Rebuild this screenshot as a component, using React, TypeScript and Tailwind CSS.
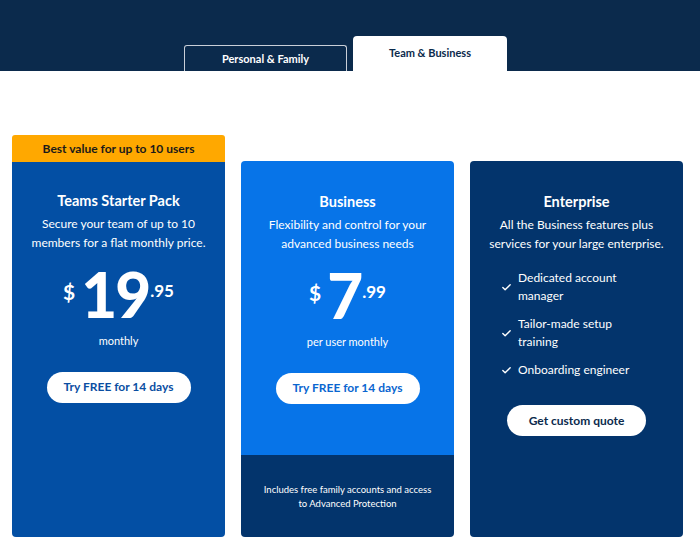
import { Check } from 'lucide-react'

type Plan = {
  title: string
  desc: string[]
  bg: string
}

function Price({ whole, cents, note }: { whole: string; cents: string; note: string }) {
  return (
    <div className="flex flex-col items-center">
      <div className="flex items-start justify-center leading-none mt-[15px]">
        <span className="text-[21px] font-bold mt-[14px] mr-[6px]">$</span>
        <span className="text-[62px] font-black tracking-[-2px] leading-[54px]">{whole}</span>
        <span className="text-[17px] font-bold mt-[15px] ml-[1px]">.{cents}</span>
      </div>
      <div className="text-[11px] mt-[12px]">{note}</div>
    </div>
  )
}

function TryButton({ color }: { color: string }) {
  return (
    <button className={`mt-[22px] w-[144px] h-[31px] rounded-full bg-white text-[12px] font-bold ${color}`}>
      Try FREE for 14 days
    </button>
  )
}

function Header({ plan }: { plan: Plan }) {
  return (
    <>
      <h3 className="text-[14.5px] font-bold mt-[31px] leading-[20px]">{plan.title}</h3>
      <p className="text-[12px] leading-[19px] mt-[3px] px-2">
        {plan.desc.map((l) => (
          <span key={l} className="block">{l}</span>
        ))}
      </p>
    </>
  )
}

export default function App() {
  const starter: Plan = {
    title: 'Teams Starter Pack',
    desc: ['Secure your team of up to 10', 'members for a flat monthly price.'],
    bg: 'bg-[#034fa4]',
  }
  const business: Plan = {
    title: 'Business',
    desc: ['Flexibility and control for your', 'advanced business needs'],
    bg: 'bg-[#0774e8]',
  }
  const enterprise: Plan = {
    title: 'Enterprise',
    desc: ['All the Business features plus', 'services for your large enterprise.'],
    bg: 'bg-[#03346c]',
  }

  const features = [['Dedicated account', 'manager'], ['Tailor-made setup', 'training'], ['Onboarding engineer']]

  return (
    <div className="w-[700px] h-[548px] bg-white font-['Lato',sans-serif] text-white overflow-hidden">
      {/* tab bar */}
      <div className="h-[71px] bg-[#0b2a4c] flex items-end pl-[184px] gap-[6px]">
        <div className="w-[163px] h-[26px] border-[1.5px] border-b-0 border-[#c9cfd8] rounded-t-[3px] flex items-center justify-center text-[11px] font-bold pt-[2px]">
          Personal &amp; Family
        </div>
        <div className="w-[154px] h-[35px] bg-white rounded-t-[4px] flex justify-center pt-[9px] text-[11px] font-bold text-[#0b2a4c]">
          Team &amp; Business
        </div>
      </div>

      <div className="flex gap-[16px] pl-[12px] mt-[64px] items-end">
        {/* starter */}
        <div className="w-[213px] flex flex-col">
          <div className="h-[28px] bg-[#ffa800] rounded-t-[3px] flex items-center justify-center text-[12px] font-bold text-[#1a1a1a]">
            Best value for up to 10 users
          </div>
          <div className={`h-[375px] ${starter.bg} rounded-b-[4px] flex flex-col items-center text-center -mt-[1px]`}>
            <div className="-mt-[2px] flex flex-col items-center">
              <Header plan={starter} />
            </div>
            <Price whole="19" cents="95" note="monthly" />
            <TryButton color="text-[#0a4ea2]" />
          </div>
        </div>

        {/* business */}
        <div className="w-[213px] h-[376px] rounded-[4px] overflow-hidden flex flex-col">
          <div className={`flex-1 ${business.bg} flex flex-col items-center text-center`}>
            <Header plan={business} />
            <Price whole="7" cents="99" note="per user monthly" />
            <TryButton color="text-[#0a66d0]" />
          </div>
          <div className="h-[82px] bg-[#03346c] flex flex-col items-center justify-center text-center text-[9.5px] leading-[14px] pt-[2px]">
            <span>Includes free family accounts and access</span>
            <span>to Advanced Protection</span>
          </div>
        </div>

        {/* enterprise */}
        <div className={`w-[213px] h-[376px] ${enterprise.bg} rounded-[4px] flex flex-col items-center text-center`}>
          <Header plan={enterprise} />
          <ul className="self-start ml-[31px] mt-[16px] flex flex-col gap-[10px] text-left text-[12px] leading-[18px]">
            {features.map((f) => (
              <li key={f[0]} className="flex items-center gap-[6px]">
                <Check className="w-[11px] h-[11px] shrink-0" strokeWidth={3} />
                <span>
                  {f.map((l) => (
                    <span key={l} className="block">{l}</span>
                  ))}
                </span>
              </li>
            ))}
          </ul>
          <button className="mt-[26px] w-[139px] h-[31px] rounded-full bg-white text-[12px] font-bold text-[#0b2a4c]">
            Get custom quote
          </button>
        </div>
      </div>
    </div>
  )
}
